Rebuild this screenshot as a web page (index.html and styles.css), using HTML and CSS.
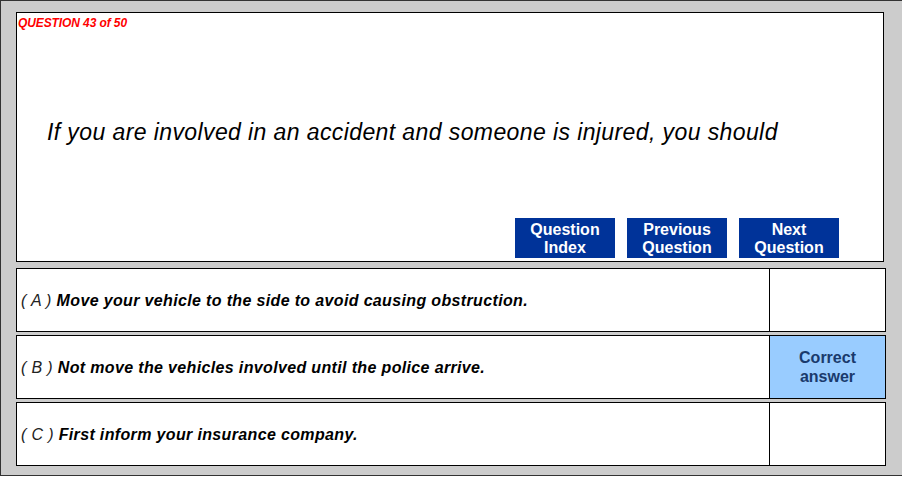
FILE: index.html
```html
<!DOCTYPE html>
<html lang="en">
<head>
<meta charset="utf-8">
<title>Question 43 of 50</title>
<link rel="stylesheet" href="styles.css">
</head>
<body>
<div class="frame">
  <div class="panel">
    <div class="qnum">QUESTION 43 of 50</div>
    <div class="qtext">If you are involved in an accident and someone is injured, you should</div>
    <div class="nav">
      <div class="btn">Question<br>Index</div>
      <div class="btn">Previous<br>Question</div>
      <div class="btn">Next<br>Question</div>
    </div>
  </div>
  <div class="options">
    <div class="opt">
      <div class="opt-text"><span class="letter">( A )</span> <b>Move your vehicle to the side to avoid causing obstruction.</b></div>
      <div class="opt-mark"></div>
    </div>
    <div class="opt">
      <div class="opt-text"><span class="letter">( B )</span> <b>Not move the vehicles involved until the police arrive.</b></div>
      <div class="opt-mark correct">Correct<br>answer</div>
    </div>
    <div class="opt">
      <div class="opt-text"><span class="letter">( C )</span> <b>First inform your insurance company.</b></div>
      <div class="opt-mark"></div>
    </div>
  </div>
</div>
</body>
</html>
```

FILE: styles.css
```css
* { box-sizing: border-box; }
html, body { margin: 0; padding: 0; background: #ffffff; }
body { font-family: "Liberation Sans", Arial, sans-serif; }

.frame {
  width: 902px;
  height: 476px;
  background: #cccccc;
  border-left: 1px solid #333333;
  border-top: 1px solid #333333;
  border-bottom: 1px solid #333333;
  padding: 11px 0 0 15px;
}

.panel {
  width: 868px;
  height: 250px;
  background: #ffffff;
  border: 1px solid #000000;
  display: flex;
  flex-direction: column;
}

.qnum {
  color: #ff0000;
  font-size: 12px;
  line-height: 14px;
  font-weight: bold;
  font-style: italic;
  letter-spacing: -0.1px;
  padding: 3px 0 0 1px;
}

.qtext {
  margin-top: 89px;
  padding-left: 30px;
  font-size: 23px;
  line-height: 26px;
  font-style: italic;
  letter-spacing: 0.4px;
  color: #000000;
}

.nav {
  margin-top: auto;
  margin-bottom: 3px;
  margin-right: 44px;
  align-self: flex-end;
  display: flex;
  gap: 12px;
}

.btn {
  width: 100px;
  height: 40px;
  background: #003399;
  color: #ffffff;
  font-weight: bold;
  font-size: 16px;
  line-height: 18px;
  text-align: center;
  padding-top: 3px;
}

.options {
  margin-top: 6px;
  display: flex;
  flex-direction: column;
  gap: 3px;
}

.opt {
  width: 870px;
  height: 64px;
  background: #ffffff;
  border: 1px solid #000000;
  display: flex;
}

.opt-text {
  flex: 1;
  padding: 23px 0 0 4px;
  font-size: 16px;
  line-height: 18px;
  font-style: italic;
  letter-spacing: 0.35px;
  color: #000000;
}

.letter {
  font-weight: normal;
  color: #222222;
}

.opt-mark {
  width: 116px;
  border-left: 1px solid #000000;
  display: flex;
  align-items: center;
  justify-content: center;
  text-align: center;
  font-size: 16px;
  line-height: 19px;
  font-weight: bold;
  color: #1a3a6c;
}

.opt-mark.correct {
  background: #99ccff;
}
```
